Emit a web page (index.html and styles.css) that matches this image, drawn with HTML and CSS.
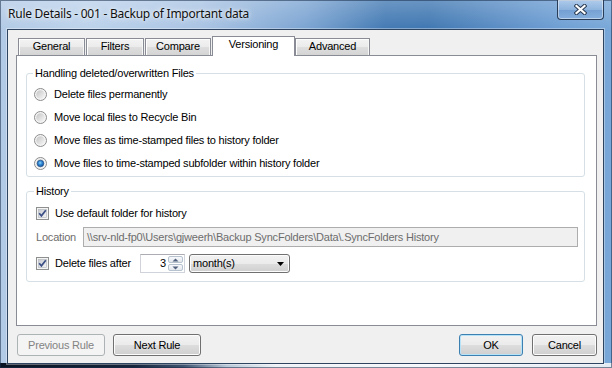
FILE: index.html
```html
<!DOCTYPE html>
<html>
<head>
<meta charset="utf-8">
<title>Rule Details</title>
<link rel="stylesheet" href="styles.css">
</head>
<body>
<svg class="defs" width="0" height="0" aria-hidden="true">
  <defs>
    <linearGradient id="rIn" x1="0" y1="0" x2="1" y2="1">
      <stop offset="0" stop-color="#c4c4c4"/>
      <stop offset="1" stop-color="#f8f8f8"/>
    </linearGradient>
    <radialGradient id="rDot" cx="0.45" cy="0.4" r="0.65">
      <stop offset="0" stop-color="#8fd3fb"/>
      <stop offset="0.45" stop-color="#2f86d2"/>
      <stop offset="1" stop-color="#174f94"/>
    </radialGradient>
    <linearGradient id="cIn" x1="0" y1="0" x2="1" y2="1">
      <stop offset="0" stop-color="#c6cad0"/>
      <stop offset="1" stop-color="#f5f5f5"/>
    </linearGradient>
  </defs>
</svg>
<div class="window">
  <div class="titlebar">
    <span class="title">Rule Details - 001 - Backup of Important data</span>
    <span class="close">
      <svg width="13" height="11" viewBox="0 0 13 11">
        <path d="M2.5 2 L10.5 9 M10.5 2 L2.5 9" stroke="#2a3b52" stroke-width="4.2" stroke-linecap="square" fill="none"/>
        <path d="M2.5 2 L10.5 9 M10.5 2 L2.5 9" stroke="#ffffff" stroke-width="2.2" stroke-linecap="square" fill="none"/>
      </svg>
    </span>
  </div>
  <div class="client">
    <div class="tabs">
      <span class="tab tab-general">General</span>
      <span class="tab tab-filters">Filters</span>
      <span class="tab tab-compare">Compare</span>
      <span class="tab tab-versioning selected">Versioning</span>
      <span class="tab tab-advanced">Advanced</span>
    </div>
    <div class="panel">
      <fieldset class="group group-handling">
        <legend>Handling deleted/overwritten Files</legend>
        <div class="opt">
          <svg class="radio" width="13" height="13" viewBox="0 0 13 13"><circle cx="6.5" cy="6.5" r="6" fill="#f4f4f4" stroke="#8c8c8c"/><circle cx="6.5" cy="6.5" r="4.3" fill="url(#rIn)"/></svg>
          <span>Delete files permanently</span>
        </div>
        <div class="opt">
          <svg class="radio" width="13" height="13" viewBox="0 0 13 13"><circle cx="6.5" cy="6.5" r="6" fill="#f4f4f4" stroke="#8c8c8c"/><circle cx="6.5" cy="6.5" r="4.3" fill="url(#rIn)"/></svg>
          <span>Move local files to Recycle Bin</span>
        </div>
        <div class="opt">
          <svg class="radio" width="13" height="13" viewBox="0 0 13 13"><circle cx="6.5" cy="6.5" r="6" fill="#f4f4f4" stroke="#8c8c8c"/><circle cx="6.5" cy="6.5" r="4.3" fill="url(#rIn)"/></svg>
          <span>Move files as time-stamped files to history folder</span>
        </div>
        <div class="opt">
          <svg class="radio" width="13" height="13" viewBox="0 0 13 13"><circle cx="6.5" cy="6.5" r="6" fill="#f4f4f4" stroke="#8c8c8c"/><circle cx="6.5" cy="6.5" r="4.3" fill="url(#rIn)"/><circle cx="6.5" cy="6.5" r="3.3" fill="url(#rDot)" stroke="#1a4a82" stroke-width="0.6"/></svg>
          <span>Move files to time-stamped subfolder within history folder</span>
        </div>
      </fieldset>
      <fieldset class="group group-history">
        <legend>History</legend>
        <div class="hrow hrow-default">
          <svg class="check" width="13" height="13" viewBox="0 0 13 13"><rect x="0.5" y="0.5" width="12" height="12" fill="#f4f4f4" stroke="#8e8f8f"/><rect x="2.5" y="2.5" width="8" height="8" fill="url(#cIn)" stroke="#b0b4ba" stroke-width="0.6"/><path d="M3.2 6.3 L5.4 8.8 L9.8 3.2" stroke="#3b4f86" stroke-width="1.7" fill="none"/></svg>
          <span>Use default folder for history</span>
        </div>
        <div class="hrow hrow-location">
          <span class="loc-label">Location</span>
          <div class="textbox disabled">\\srv-nld-fp0\Users\gjweerh\Backup SyncFolders\Data\.SyncFolders History</div>
        </div>
        <div class="hrow hrow-delete">
          <svg class="check" width="13" height="13" viewBox="0 0 13 13"><rect x="0.5" y="0.5" width="12" height="12" fill="#f4f4f4" stroke="#8e8f8f"/><rect x="2.5" y="2.5" width="8" height="8" fill="url(#cIn)" stroke="#b0b4ba" stroke-width="0.6"/><path d="M3.2 6.3 L5.4 8.8 L9.8 3.2" stroke="#3b4f86" stroke-width="1.7" fill="none"/></svg>
          <span class="del-label">Delete files after</span>
          <div class="spin">
            <span class="spin-value">3</span>
            <span class="spin-buttons">
              <span class="spin-btn"><svg width="7" height="4" viewBox="0 0 7 4"><path d="M0.5 3.5 L3.5 0.5 L6.5 3.5 Z" fill="#4f5f7c"/></svg></span>
              <span class="spin-btn"><svg width="7" height="4" viewBox="0 0 7 4"><path d="M0.5 0.5 L3.5 3.5 L6.5 0.5 Z" fill="#4f5f7c"/></svg></span>
            </span>
          </div>
          <div class="combo">
            <span class="combo-text">month(s)</span>
            <svg class="combo-arrow" width="7" height="4" viewBox="0 0 7 4"><path d="M0 0 L7 0 L3.5 4 Z" fill="#000"/></svg>
          </div>
        </div>
      </fieldset>
    </div>
    <div class="buttons">
      <span class="btn btn-prev disabled">Previous Rule</span>
      <span class="btn btn-next">Next Rule</span>
      <span class="btn btn-ok default">OK</span>
      <span class="btn btn-cancel">Cancel</span>
    </div>
  </div>
</div>
</body>
</html>
```

FILE: styles.css
```css
* { box-sizing: border-box; }
html, body { margin: 0; padding: 0; }
body {
  width: 612px;
  height: 368px;
  overflow: hidden;
  font-family: "Liberation Sans", Arial, sans-serif;
  font-size: 11px;
  letter-spacing: -0.2px;
  color: #000;
  background: #6f9ccf;
}
.defs { display: block; width: 0; height: 0; }

.window {
  width: 612px;
  height: 368px;
  padding: 0 8px 4px 7px;
  display: flex;
  flex-direction: column;
  background:
    linear-gradient(90deg, #0a1322 0%, #16253c 22%, #3e5370 30%, #b9c8d8 37%, #eef2f6 45%, #f5f7fa 70%, #e4ebf3 100%) bottom / 100% 5px no-repeat,
    linear-gradient(180deg, rgba(255,255,255,0.22) 0%, rgba(255,255,255,0) 30px),
    linear-gradient(90deg, #b2cae6 0%, #bcd2eb 14%, #a9c3e3 33%, #7ba4d2 50%, #4279b3 63%, #3f77b1 70%, #5a8dc5 82%, #6e9fd4 92%, #78a7d8 100%);
  box-shadow: inset 0 0 0 1px rgba(25, 45, 75, 0.55);
}

.titlebar {
  height: 29px;
  display: flex;
  align-items: flex-start;
}
.title {
  font-family: "Noto Sans", "Open Sans", sans-serif;
  font-size: 12px;
  letter-spacing: -0.25px;
  line-height: 16px;
  padding: 6px 0 0 1px;
  color: #101010;
  text-shadow: 0 0 6px rgba(255,255,255,0.9), 0 0 3px rgba(255,255,255,0.7);
  white-space: nowrap;
}
.close {
  margin-left: auto;
  margin-right: 0;
  width: 47px;
  height: 20px;
  display: flex;
  align-items: center;
  justify-content: center;
  border: 1px solid #2a3d58;
  border-top: none;
  border-radius: 0 0 4px 4px;
  background: linear-gradient(180deg, rgba(200,220,245,0.55) 0%, rgba(150,185,225,0.45) 50%, rgba(95,140,200,0.45) 52%, rgba(140,180,225,0.55) 100%);
  box-shadow: inset 0 0 0 1px rgba(255,255,255,0.45);
  padding-top: 0;
}

.client {
  flex: 1;
  border: 1px solid #2e4461;
  background: #f0f0f0;
  box-shadow: 0 0 0 1px rgba(255,255,255,0.35);
  display: flex;
  flex-direction: column;
  padding: 6px 6px 7px 8px;
}

/* tabs */
.tabs {
  display: flex;
  align-items: flex-end;
  height: 20px;
  margin-bottom: -1px;
  padding-left: 2px;
  position: relative;
  z-index: 1;
}
.tab {
  display: block;
  height: 18px;
  border: 1px solid #898c95;
  text-align: center;
  line-height: 15px;
  background: linear-gradient(180deg, #f3f3f3 0%, #ebebeb 50%, #dedede 52%, #d4d4d4 100%);
  box-shadow: inset 1px 1px 0 #fdfdfd, inset -1px 0 0 #f6f6f6;
}
.tab-general { width: 67px; }
.tab-filters { width: 58px; margin-left: 1px; }
.tab-compare { width: 66px; margin-left: 1px; }
.tab-versioning { width: 83px; margin-left: 1px; }
.tab-advanced { width: 75px; }
.tab.selected {
  height: 20px;
  border-bottom: none;
  background: #ffffff;
  box-shadow: none;
}

.panel {
  height: 271px;
  border: 1px solid #898c95;
  background: #ffffff;
  padding: 11px 11px 0 9px;
}

.group {
  margin: 0;
  padding: 0;
  border: 1px solid #d5dfe5;
  border-radius: 3px;
  min-width: 0;
}
.group legend {
  padding: 0 2px;
  line-height: 13px;
  margin-left: 6px;
}
.group-handling { padding: 3px 0 1px 0; }
.group-history { margin-top: 8px; padding: 4px 6px 8px 9px; }
.group-history legend { margin-left: -2px; }

.opt {
  display: flex;
  align-items: center;
  height: 23px;
  padding-left: 7px;
  gap: 7px;
  line-height: 13px;
}
.radio, .check { flex: none; display: block; }

.hrow {
  display: flex;
  align-items: center;
  line-height: 13px;
}
.hrow-default { height: 22px; gap: 6px; }
.hrow-location { height: 20px; margin-top: 3px; }
.hrow-delete { height: 19px; margin-top: 7px; }
.hrow-delete .check { margin-right: 6px; }

.loc-label {
  width: 47px;
  flex: none;
  color: #6d6d6d;
}
.textbox {
  flex: 1;
  height: 20px;
  border: 1px solid #adadad;
  background: #f0f0f0;
  color: #6d6d6d;
  padding: 0 3px;
  line-height: 18px;
  white-space: nowrap;
  overflow: hidden;
}

.del-label { width: 85px; flex: none; }

.spin {
  width: 45px;
  height: 19px;
  display: flex;
  border: 1px solid #d0d4da;
  border-top-color: #abadb3;
  background: #fff;
  padding: 0 1px 0 0;
}
.spin-value {
  flex: 1;
  text-align: right;
  line-height: 17px;
  padding-right: 2px;
}
.spin-buttons {
  width: 15px;
  display: flex;
  flex-direction: column;
  gap: 1px;
  padding: 1px 0;
}
.spin-btn {
  flex: 1;
  display: flex;
  align-items: center;
  justify-content: center;
  border: 1px solid #b7c2cf;
  border-radius: 2px;
  background: linear-gradient(180deg, #f7f9fb, #e3e8ee);
}

.combo {
  width: 101px;
  height: 19px;
  margin-left: 4px;
  display: flex;
  align-items: center;
  border: 1px solid #707070;
  border-radius: 3px;
  background: linear-gradient(180deg, #f2f2f2 0%, #ebebeb 50%, #dddddd 51%, #cfcfcf 100%);
  box-shadow: inset 0 0 0 1px #fcfcfc;
  padding: 0 5px 0 3px;
}
.combo-text { flex: 1; line-height: 15px; }
.combo-arrow { display: block; flex: none; }

/* buttons */
.buttons {
  display: flex;
  margin-top: 8px;
  height: 22px;
}
.btn {
  display: block;
  height: 22px;
  text-align: center;
  line-height: 20px;
  border: 1px solid #707070;
  border-radius: 3px;
  background: linear-gradient(180deg, #f2f2f2 0%, #ebebeb 50%, #dddddd 51%, #cfcfcf 100%);
  box-shadow: inset 0 0 0 1px #fcfcfc;
}
.btn.disabled {
  border-color: #adb2b5;
  background: #f4f4f4;
  color: #838383;
  box-shadow: none;
}
.btn.default {
  border-color: #3c7fb1;
  box-shadow: inset 0 0 0 1px #b6e3f8;
}
.btn-prev { width: 88px; margin-left: 1px; }
.btn-next { width: 88px; margin-left: 8px; }
.btn-ok { width: 64px; margin-left: auto; }
.btn-cancel { width: 65px; margin-left: 9px; }
```
